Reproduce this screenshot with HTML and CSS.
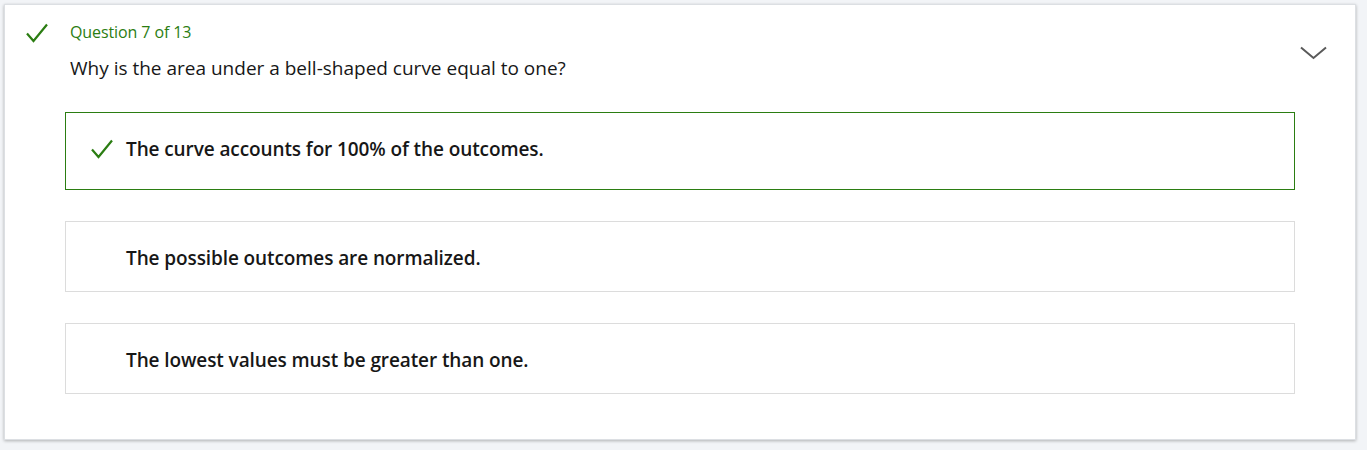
FILE: index.html
```html
<!DOCTYPE html>
<html lang="en">
<head>
<meta charset="utf-8">
<title>Question 7 of 13</title>
<link rel="stylesheet" href="styles.css">
</head>
<body>
<section class="card">
  <header class="head">
    <svg class="status-icon" width="22" height="20" viewBox="0 0 22 20" aria-hidden="true">
      <path d="M1 10.5 L7.5 18 L21 1.5" fill="none" stroke="#2b7d12" stroke-width="2.2"/>
    </svg>
    <div class="head-text">
      <div class="meta">Question 7 of 13</div>
      <div class="question">Why is the area under a bell-shaped curve equal to one?</div>
    </div>
    <svg class="chevron" width="27" height="14" viewBox="0 0 27 14" aria-hidden="true">
      <path d="M1 1.5 L13.5 12 L26 1.5" fill="none" stroke="#5a5a5a" stroke-width="2"/>
    </svg>
  </header>
  <div class="options">
    <div class="option correct">
      <svg class="opt-icon" width="22" height="20" viewBox="0 0 22 20" aria-hidden="true">
        <path d="M1 10.5 L7.5 18 L21 1.5" fill="none" stroke="#2b7d12" stroke-width="2.2"/>
      </svg>
      <span class="opt-text">The curve accounts for 100% of the outcomes.</span>
    </div>
    <div class="option">
      <span class="opt-icon"></span>
      <span class="opt-text">The possible outcomes are normalized.</span>
    </div>
    <div class="option">
      <span class="opt-icon"></span>
      <span class="opt-text">The lowest values must be greater than one.</span>
    </div>
  </div>
</section>
</body>
</html>
```

FILE: styles.css
```css
html, body {
  margin: 0;
  padding: 0;
}
body {
  background: #f2f4f7;
  font-family: "Open Sans", "Noto Sans", sans-serif;
  color: #171717;
  padding: 4px 0 0 4px;
  height: 450px;
  box-sizing: border-box;
}
.card {
  width: 1352px;
  height: 436px;
  box-sizing: border-box;
  background: #fff;
  border: 1px solid #dcdfe3;
  box-shadow: 0 1px 3px rgba(0, 0, 0, 0.28);
  padding-top: 17px;
}
.head {
  display: flex;
  align-items: flex-start;
  height: 59px;
}
.status-icon {
  margin: 1px 0 0 21px;
  flex: none;
}
.head-text {
  margin-left: 22px;
  flex: 1;
}
.meta {
  color: #2b7d12;
  font-size: 16px;
  line-height: 20px;
  letter-spacing: -0.1px;
}
.question {
  margin-top: 13px;
  font-size: 19px;
  line-height: 26px;
}
.chevron {
  flex: none;
  margin: 24px 28px 0 0;
}
.options {
  padding: 0 60px;
  margin-top: 31px;
  display: flex;
  flex-direction: column;
  gap: 31px;
}
.option {
  display: flex;
  align-items: center;
  height: 71px;
  box-sizing: border-box;
  border: 1px solid #dcdcdc;
  padding-left: 25px;
  padding-top: 2px;
}
.option.correct {
  height: 78px;
  border-color: #2b7d12;
  padding-top: 0;
  padding-bottom: 4px;
}
.opt-icon {
  width: 22px;
  height: 20px;
  flex: none;
}
.opt-text {
  margin-left: 13px;
  font-size: 19px;
  font-weight: 600;
  letter-spacing: -0.1px;
}
```
